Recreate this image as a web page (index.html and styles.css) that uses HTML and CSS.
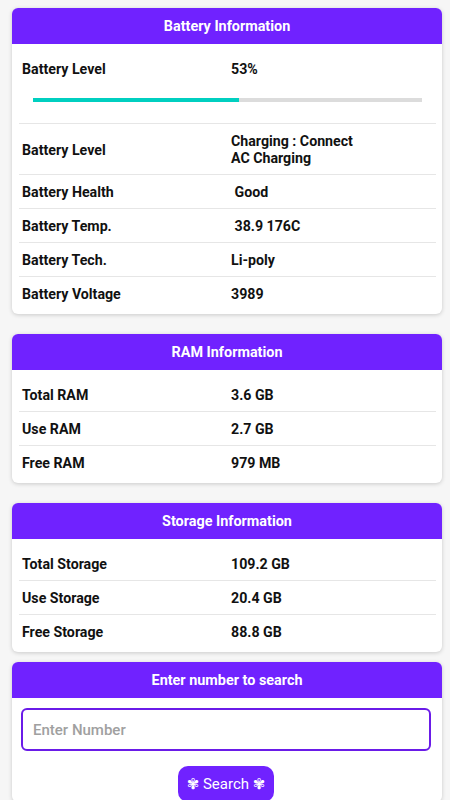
FILE: index.html
```html
<!DOCTYPE html>
<html>
  <head>
    <meta charset="UTF-8" />
    <title>Device Info</title>
    <link rel="stylesheet" href="styles.css">
  </head>
  <body>
    <div class="card">
      <div class="card-head">Battery Information</div>
      <div class="card-body">
        <div class="level">
          <div class="row plain">
            <span class="label">Battery Level</span>
            <span class="value">53%</span>
          </div>
          <div class="bar"><div class="bar-fill" style="width: 53%"></div></div>
        </div>
        <div class="row">
          <span class="label">Battery Level</span>
          <span class="value">Charging : Connect<br>AC Charging</span>
        </div>
        <div class="row">
          <span class="label">Battery Health</span>
          <span class="value">&nbsp;Good</span>
        </div>
        <div class="row">
          <span class="label">Battery Temp.</span>
          <span class="value">&nbsp;38.9 176C</span>
        </div>
        <div class="row">
          <span class="label">Battery Tech.</span>
          <span class="value">Li-poly</span>
        </div>
        <div class="row last">
          <span class="label">Battery Voltage</span>
          <span class="value">3989</span>
        </div>
      </div>
    </div>

    <div class="card">
      <div class="card-head">RAM Information</div>
      <div class="card-body">
        <div class="row">
          <span class="label">Total RAM</span>
          <span class="value">3.6 GB</span>
        </div>
        <div class="row">
          <span class="label">Use RAM</span>
          <span class="value">2.7 GB</span>
        </div>
        <div class="row last">
          <span class="label">Free RAM</span>
          <span class="value">979 MB</span>
        </div>
      </div>
    </div>

    <div class="card">
      <div class="card-head">Storage Information</div>
      <div class="card-body">
        <div class="row">
          <span class="label">Total Storage</span>
          <span class="value">109.2 GB</span>
        </div>
        <div class="row">
          <span class="label">Use Storage</span>
          <span class="value">20.4 GB</span>
        </div>
        <div class="row last">
          <span class="label">Free Storage</span>
          <span class="value">88.8 GB</span>
        </div>
      </div>
    </div>

    <div class="card search-card">
      <div class="card-head">Enter number to search</div>
      <div class="search-body">
        <input type="text" class="search-input" placeholder="Enter Number" />
        <button class="search-btn">&#10046; Search &#10046;</button>
      </div>
    </div>
  </body>
</html>
```

FILE: styles.css
```css
body {
  font-family: Roboto, "Noto Sans", sans-serif;
  margin: 0;
  padding: 8px 8px 0 12px;
  background: #f6f6f6;
  color: #111;
}
.card {
  width: 430px;
  background: #fff;
  border-radius: 6px;
  box-shadow: 0 1px 4px rgba(0, 0, 0, 0.18);
  margin-bottom: 20px;
  overflow: hidden;
}
.card-head {
  background: #7022ff;
  color: #fff;
  font-weight: bold;
  font-size: 14.4px;
  text-align: center;
  height: 36px;
  line-height: 37px;
}
.card-body {
  padding: 8px 6px 4px 7px;
}
.row {
  display: grid;
  grid-template-columns: 209px 1fr;
  align-items: center;
  padding: 9px 3px 7px;
  line-height: 17px;
  font-size: 14.2px;
  font-weight: bold;
  border-bottom: 1px solid #e6e6e6;
}
.row.plain {
  border-bottom: none;
}
.row.last {
  border-bottom: none;
}
.level {
  border-bottom: 1px solid #e6e6e6;
  padding-bottom: 21px;
}
.bar {
  margin: 13px 14px 0 14px;
  height: 4px;
  background: #dcdcdc;
}
.bar-fill {
  height: 4px;
  background: #00cfc0;
}
.search-card {
  margin-top: -10px;
}
.search-body {
  padding: 10px 11px 0 9px;
  text-align: center;
}
.search-input {
  display: block;
  box-sizing: border-box;
  width: 410px;
  height: 43px;
  border: 2px solid #6a1be8;
  border-radius: 6px;
  padding: 0 10px;
  font-family: Roboto, sans-serif;
  font-size: 15px;
  font-weight: 500;
  outline: none;
}
.search-input::placeholder {
  color: #a0a0a0;
}
.search-btn {
  margin-top: 15px;
  background: #7022ff;
  color: #fff;
  border: none;
  border-radius: 10px;
  font-family: Roboto, "DejaVu Sans", sans-serif;
  font-size: 15px;
  padding: 0 9px;
  height: 36px;
}
```
